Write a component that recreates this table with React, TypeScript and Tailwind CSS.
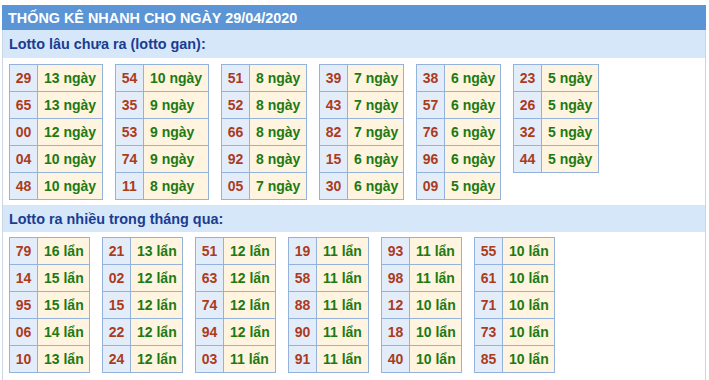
const gan: [string, string][][] = [
  [['29', '13 ngày'], ['65', '13 ngày'], ['00', '12 ngày'], ['04', '10 ngày'], ['48', '10 ngày']],
  [['54', '10 ngày'], ['35', '9 ngày'], ['53', '9 ngày'], ['74', '9 ngày'], ['11', '8 ngày']],
  [['51', '8 ngày'], ['52', '8 ngày'], ['66', '8 ngày'], ['92', '8 ngày'], ['05', '7 ngày']],
  [['39', '7 ngày'], ['43', '7 ngày'], ['82', '7 ngày'], ['15', '6 ngày'], ['30', '6 ngày']],
  [['38', '6 ngày'], ['57', '6 ngày'], ['76', '6 ngày'], ['96', '6 ngày'], ['09', '5 ngày']],
  [['23', '5 ngày'], ['26', '5 ngày'], ['32', '5 ngày'], ['44', '5 ngày']],
];
const ganWidths = ['w-[94px]', 'w-[94px]', 'w-[86px]', 'w-[85px]', 'w-[85px]', 'w-[86px]'];

const nhieu: [string, string][][] = [
  [['79', '16 lẩn'], ['14', '15 lẩn'], ['95', '15 lẩn'], ['06', '14 lẩn'], ['10', '13 lẩn']],
  [['21', '13 lẩn'], ['02', '12 lẩn'], ['15', '12 lẩn'], ['22', '12 lẩn'], ['24', '12 lẩn']],
  [['51', '12 lẩn'], ['63', '12 lẩn'], ['74', '12 lẩn'], ['94', '12 lẩn'], ['03', '11 lẩn']],
  [['19', '11 lẩn'], ['58', '11 lẩn'], ['88', '11 lẩn'], ['90', '11 lẩn'], ['91', '11 lẩn']],
  [['93', '11 lẩn'], ['98', '11 lẩn'], ['12', '10 lẩn'], ['18', '10 lẩn'], ['40', '10 lẩn']],
  [['55', '10 lẩn'], ['61', '10 lẩn'], ['71', '10 lẩn'], ['73', '10 lẩn'], ['85', '10 lẩn']],
];

function StatTable({ rows, width }: { rows: [string, string][]; width: string }) {
  return (
    <table className={`${width} border-collapse table-fixed self-start shrink-0`}>
      <colgroup>
        <col className="w-[28px]" />
        <col />
      </colgroup>
      <tbody>
        {rows.map(([num, val]) => (
          <tr key={num} className="h-[27px]">
            <td className="border border-[#94b3dc] bg-[#e3edfa] p-0 text-[#ac3b1d] text-center">{num}</td>
            <td className="border border-[#94b3dc] bg-[#fff4e0] pl-[6px] pr-0 py-0 text-[#1d7a12] whitespace-nowrap overflow-hidden">{val}</td>
          </tr>
        ))}
      </tbody>
    </table>
  );
}

export default function App() {
  return (
    <div className="w-[709px] h-[380px] bg-white pt-[5px] pl-[2px] font-['Liberation_Sans',Arial,sans-serif] font-bold text-[14px] leading-[16px]">
      <div className="w-[704px] h-[375px] border-x border-[#c9d6e6]">
        <div className="h-[25px] bg-[#5b95d6] text-white text-[14.4px] pl-[6px] flex items-center -mx-px">
          THỐNG KÊ NHANH CHO NGÀY 29/04/2020
        </div>
        <div className="h-[28px] bg-[#d6e7fa] text-[#1a3c92] text-[14.4px] pl-[6px] flex items-center">
          Lotto lâu chưa ra (lotto gan):
        </div>
        <div className="flex gap-[12px] pl-[6px] pt-[6px] pb-[6px] h-[147px]">
          {gan.map((t, i) => (
            <StatTable key={i} rows={t} width={ganWidths[i]} />
          ))}
        </div>
        <div className="h-[27px] bg-[#d6e7fa] text-[#1a3c92] text-[14.4px] pl-[6px] flex items-center">
          Lotto ra nhiều trong tháng qua:
        </div>
        <div className="flex gap-[12px] pl-[6px] pt-[5px]">
          {nhieu.map((t, i) => (
            <StatTable key={i} rows={t} width="w-[81px]" />
          ))}
        </div>
      </div>
    </div>
  );
}
